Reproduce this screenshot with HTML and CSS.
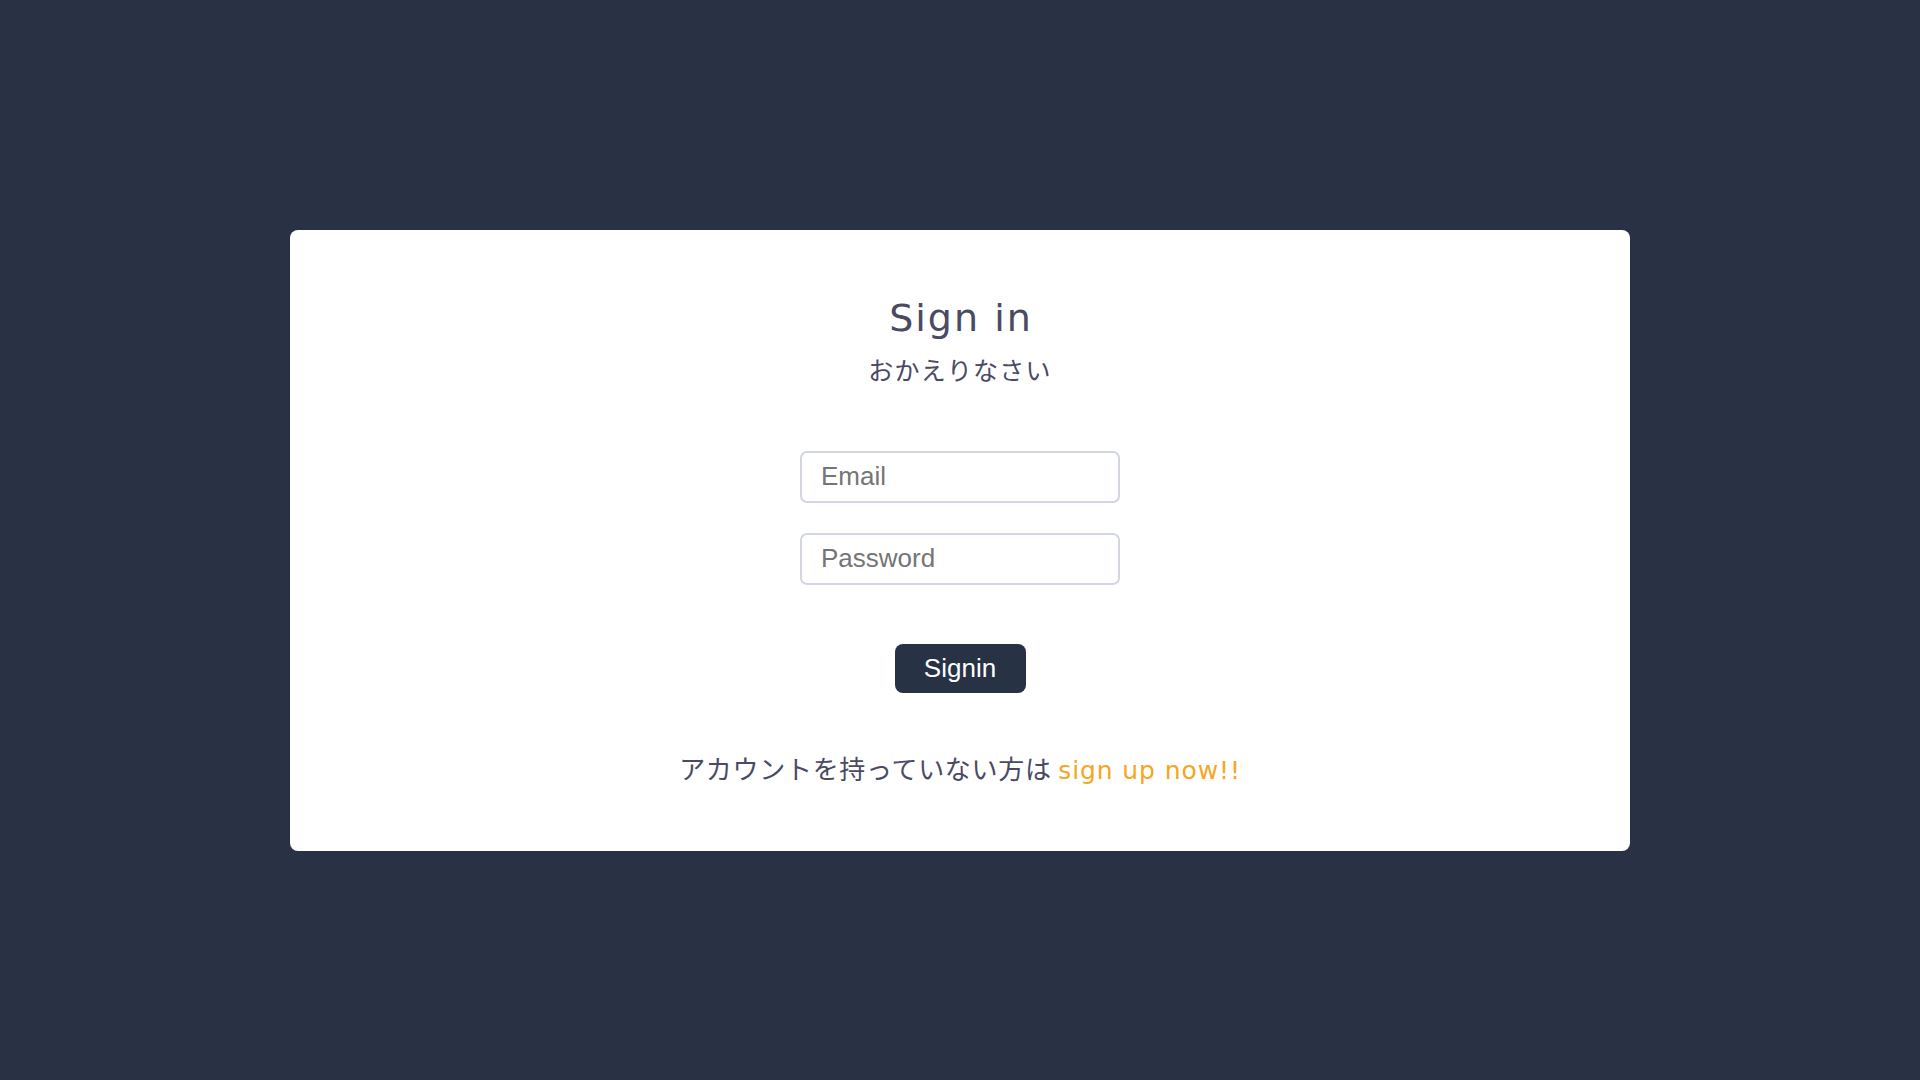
FILE: index.html
```html
<!DOCTYPE html>
<html lang="ja">
<head>
<meta charset="utf-8">
<title>Sign in</title>
<link rel="stylesheet" href="styles.css">
</head>
<body>
<main class="page">
  <section class="card">
    <h1 class="title">Sign in</h1>
    <p class="subtitle">おかえりなさい</p>
    <form class="form">
      <input class="field" type="email" placeholder="Email">
      <input class="field" type="password" placeholder="Password">
      <button class="btn" type="button">Signin</button>
    </form>
    <p class="footer">アカウントを持っていない方は <a class="link" href="#">sign up now!!</a></p>
  </section>
</main>
</body>
</html>
```
FILE: styles.css
```css
html, body {
  margin: 0;
  padding: 0;
  height: 100%;
}
body {
  background: #283244;
  font-family: "Noto Sans CJK JP", "Noto Sans", sans-serif;
}
.page {
  height: 100%;
  display: flex;
  align-items: center;
  justify-content: center;
}
.card {
  width: 1340px;
  box-sizing: border-box;
  background: #ffffff;
  border-radius: 8px;
  padding: 65px 0 66px;
  display: flex;
  flex-direction: column;
  align-items: center;
}
.title {
  margin: 0;
  font-family: "DejaVu Sans", "Noto Sans", sans-serif;
  font-weight: 400;
  font-size: 38px;
  line-height: 46px;
  letter-spacing: 2px;
  padding-left: 2px;
  color: #4a4a63;
}
.subtitle {
  margin: 10px 0 0;
  font-size: 25px;
  line-height: 36px;
  letter-spacing: 1.2px;
  color: #4a4a63;
}
.form {
  margin-top: 64px;
  display: flex;
  flex-direction: column;
  align-items: center;
}
.field {
  width: 320px;
  height: 52px;
  box-sizing: border-box;
  border: 2px solid #d2d6e1;
  border-radius: 7px;
  padding: 0 19px;
  font-family: "Liberation Sans", Arial, sans-serif;
  font-size: 26px;
  color: #333;
  outline: none;
}
.field + .field {
  margin-top: 30px;
}
.field::placeholder {
  color: #757575;
}
.btn {
  margin-top: 59px;
  width: 131px;
  height: 49px;
  border: none;
  border-radius: 8px;
  background: #273244;
  color: #ffffff;
  font-family: "Liberation Sans", Arial, sans-serif;
  font-size: 26px;
  cursor: pointer;
}
.footer {
  margin: 58px 0 0;
  font-size: 26px;
  line-height: 34px;
  letter-spacing: 0.7px;
  color: #4a4a63;
}
.link {
  font-family: "DejaVu Sans", "Noto Sans", sans-serif;
  font-size: 25px;
  line-height: 1;
  color: #f5a623;
  text-decoration: none;
  letter-spacing: 0.9px;
}
```
